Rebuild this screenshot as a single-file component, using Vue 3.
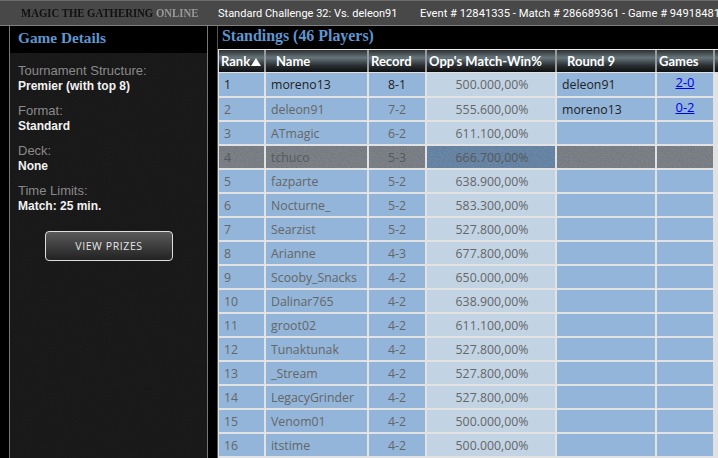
<template>
  <div class="page">
    <header class="topbar">
      <div class="logo"><b>MAGIC THE GATHERING <span>ONLINE</span></b></div>
      <div class="event">Standard Challenge 32: Vs. deleon91</div>
      <div class="ids">Event # 12841335 - Match # 286689361 - Game # 949184814</div>
    </header>
    <div class="content">
      <aside class="details">
        <h2>Game Details</h2>
        <div class="details-body noise">
          <div v-for="item in details" :key="item.label" class="detail">
            <div class="label">{{ item.label }}</div>
            <div class="value">{{ item.value }}</div>
          </div>
          <button class="prizes">VIEW PRIZES</button>
        </div>
      </aside>
      <main class="standings">
        <h2>Standings (46 Players)</h2>
        <div class="table">
          <div class="row head">
            <div class="h-rank">Rank<i class="arrow"></i></div>
            <div class="h-name">Name</div>
            <div>Record</div>
            <div>Opp's Match-Win%</div>
            <div class="h-round">Round 9</div>
            <div>Games</div>
            <div></div>
          </div>
          <div
            v-for="(p, i) in players"
            :key="p.name"
            class="row"
            :class="{ dark: p.dark, first: i === 0 }"
          >
            <div class="rank">{{ i + 1 }}</div>
            <div class="name">{{ p.name }}</div>
            <div class="center">{{ p.record }}</div>
            <div class="center pct">{{ p.pct }}</div>
            <div class="opp">{{ p.opp }}</div>
            <div class="games"><a v-if="p.games" href="#">{{ p.games }}</a></div>
          </div>
        </div>
      </main>
    </div>
  </div>
</template>

<script setup>
const details = [
  { label: "Tournament Structure:", value: "Premier (with top 8)" },
  { label: "Format:", value: "Standard" },
  { label: "Deck:", value: "None" },
  { label: "Time Limits:", value: "Match: 25 min." },
];

const players = [
  { name: "moreno13", record: "8-1", pct: "500.000,00%", opp: "deleon91", games: "2-0" },
  { name: "deleon91", record: "7-2", pct: "555.600,00%", opp: "moreno13", games: "0-2" },
  { name: "ATmagic", record: "6-2", pct: "611.100,00%" },
  { name: "tchuco", record: "5-3", pct: "666.700,00%", dark: true },
  { name: "fazparte", record: "5-2", pct: "638.900,00%" },
  { name: "Nocturne_", record: "5-2", pct: "583.300,00%" },
  { name: "Searzist", record: "5-2", pct: "527.800,00%" },
  { name: "Arianne", record: "4-3", pct: "677.800,00%" },
  { name: "Scooby_Snacks", record: "4-2", pct: "650.000,00%" },
  { name: "Dalinar765", record: "4-2", pct: "638.900,00%" },
  { name: "groot02", record: "4-2", pct: "611.100,00%" },
  { name: "Tunaktunak", record: "4-2", pct: "527.800,00%" },
  { name: "_Stream", record: "4-2", pct: "527.800,00%" },
  { name: "LegacyGrinder", record: "4-2", pct: "527.800,00%" },
  { name: "Venom01", record: "4-2", pct: "500.000,00%" },
  { name: "itstime", record: "4-2", pct: "500.000,00%" },
];
</script>

<style>
html,
body {
  margin: 0;
  background: #000;
  overflow: hidden;
}
</style>

<style scoped>
.page {
  width: 718px;
  height: 458px;
  overflow: hidden;
  background: #000;
  font-family: "Open Sans", "Noto Sans", sans-serif;
}

.noise,
.row.dark > div {
  background-image: url("data:image/svg+xml,%3Csvg xmlns='http://www.w3.org/2000/svg' width='160' height='160'%3E%3Cfilter id='n'%3E%3CfeTurbulence type='fractalNoise' baseFrequency='0.8' numOctaves='2'/%3E%3CfeColorMatrix values='0 0 0 0 0 0 0 0 0 0 0 0 0 0 0 0.2 0 0 0 0'/%3E%3C/filter%3E%3Crect width='160' height='160' filter='url(%23n)'/%3E%3C/svg%3E");
}

.topbar {
  display: flex;
  align-items: center;
  height: 26px;
  box-sizing: border-box;
  border-top: 1px solid #6e6e6e;
  border-bottom: 1px solid #808080;
  background: #484848;
  color: #fff;
  font-family: Roboto, sans-serif;
  font-size: 11px;
  white-space: nowrap;
  overflow: hidden;
}

.logo {
  width: 218px;
  padding-left: 21px;
  box-sizing: border-box;
  flex-shrink: 0;
}

.logo b {
  display: inline-block;
  transform: scaleX(0.86);
  transform-origin: left;
  font-family: "Liberation Serif", serif;
  font-size: 12.5px;
  color: #111;
}

.logo span {
  color: #999;
}

.event {
  width: 202px;
  flex-shrink: 0;
}

.ids {
  font-size: 11.2px;
}

.content {
  display: flex;
  height: 432px;
}

.details {
  width: 199px;
  margin: 0 9px;
  box-sizing: border-box;
  border-left: 1px solid #777;
  border-right: 1px solid #777;
  flex-shrink: 0;
}

.details h2 {
  margin: 0;
  height: 27px;
  padding-left: 8px;
  background: #000;
  color: #5f96cf;
  font: bold 15.3px/24px "Liberation Serif", serif;
}

.details-body {
  height: 405px;
  box-sizing: border-box;
  padding: 10px 8px;
  background-color: #1c1c1c;
}

.detail {
  margin-bottom: 9px;
  font-family: "Liberation Sans", Arial, sans-serif;
}

.label {
  font-size: 13px;
  line-height: 15px;
  color: #8a8a8a;
}

.value {
  font-size: 12px;
  line-height: 16px;
  color: #f2f2f2;
  font-weight: bold;
}

.prizes {
  display: block;
  width: 128px;
  height: 30px;
  margin: 17px 0 0 27px;
  border: 1px solid #ddd;
  border-radius: 4px;
  background: linear-gradient(#5a5a5a, #222);
  color: #e4e4e4;
  font: 10.5px "Open Sans", sans-serif;
  letter-spacing: 0.6px;
}

.standings {
  flex: 1;
  min-width: 0;
  border-left: 1px solid #555;
}

.standings h2 {
  margin: 0;
  height: 23px;
  padding-left: 4px;
  color: #5f96cf;
  font: bold 15.9px/20px "Liberation Serif", serif;
}

.table {
  height: 409px;
  padding-left: 1px;
  background: #e2e2e2;
}

.row {
  display: grid;
  grid-template-columns: 45px 101px 56px 128px 98px 56px 3px;
  column-gap: 2px;
  height: 22px;
  padding-bottom: 2px;
  font-size: 12.3px;
  line-height: 24px;
  color: #666;
}

.row > div {
  background-color: #92b5d9;
  white-space: nowrap;
  overflow: hidden;
}

.row.first {
  height: 23px;
  color: #222;
}

.row .rank,
.row .name,
.row .opp {
  padding-left: 5px;
}

.row .center,
.row .games {
  text-align: center;
}

.row .opp {
  color: #222;
}

.row .pct {
  padding-left: 2px;
  background-color: #c2d3e4;
  color: #666;
}

.row .games {
  font-size: 13px;
  line-height: 19px;
}

.row .games a {
  color: #0000ee;
}

.row.dark > div {
  background-color: #878c93;
  color: #55585c;
}

.row.dark .pct {
  background-color: #7292b5;
}

.row.head {
  height: 22px;
  padding: 0;
  border-top: 1px solid #eee;
  border-bottom: 1px solid #e2e2e2;
  background: #999;
  font-family: Lato, sans-serif;
  font-size: 13px;
  font-weight: bold;
  line-height: 22px;
  color: #fff;
}

.row.head > div {
  padding-left: 2px;
  background: linear-gradient(#2c2f30 0, #66767c 35%, #2a2f33 70%, #0e0e0e 100%);
}

.row.head .h-name {
  padding-left: 10px;
}

.row.head .h-round {
  padding-left: 10px;
}

.arrow {
  display: inline-block;
  margin-left: 1px;
  border-left: 5px solid transparent;
  border-right: 5px solid transparent;
  border-bottom: 8px solid #fff;
}
</style>
